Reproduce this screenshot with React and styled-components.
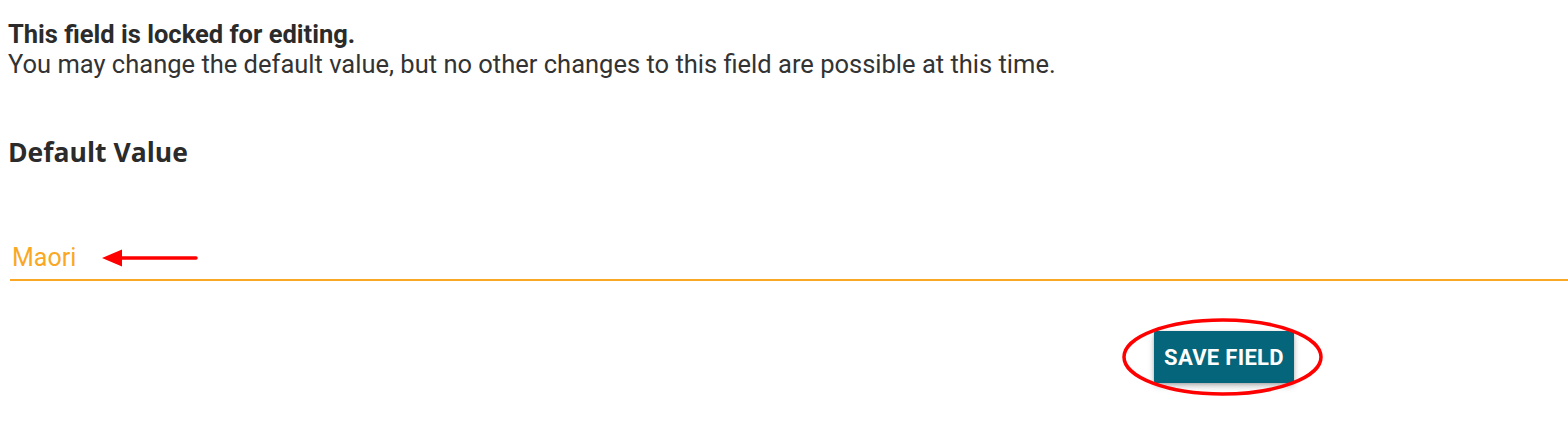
import React from "react";
import styled, { createGlobalStyle } from "styled-components";

const Global = createGlobalStyle`
  html, body { margin: 0; padding: 0; background: #fff; }
  body { font-family: Roboto, "Liberation Sans", sans-serif; color: #333; }
`;

const Page = styled.div`
  width: 1568px;
  height: 424px;
  padding: 19px 0 0 8px;
  box-sizing: border-box;
  overflow: hidden;
`;

const Notice = styled.div`
  font-size: 25.5px;
  line-height: 30px;
  color: #333;
`;

const NoticeTitle = styled.div`
  font-weight: 700;
  color: #2b2b2b;
`;

const Heading = styled.h3`
  margin: 57px 0 0 0;
  font-family: "Open Sans", "Noto Sans", sans-serif;
  font-weight: 700;
  font-size: 26.5px;
  line-height: 32px;
  color: #2b2b2b;
`;

const Field = styled.div`
  position: relative;
  margin: 63px 0 0 2px;
  border-bottom: 2px solid #f9a825;
  height: 48px;
  display: flex;
  align-items: flex-end;
`;

const Value = styled.span`
  font-size: 25px;
  line-height: 30px;
  color: #f9a825;
  padding: 0 0 6px 2px;
`;

const Arrow = styled.svg`
  position: absolute;
  left: 83px;
  top: 14px;
`;

const Actions = styled.div`
  display: flex;
  justify-content: flex-end;
  padding-right: 274px;
  margin-top: 50px;
`;

const ButtonWrap = styled.div`
  position: relative;
`;

const Button = styled.button`
  display: block;
  background: #05657a;
  color: #fff;
  border: none;
  border-radius: 2px;
  font-family: Roboto, "Liberation Sans", sans-serif;
  font-weight: 700;
  font-size: 22px;
  letter-spacing: 0.3px;
  width: 140px;
  height: 52px;
  padding: 0;
  box-shadow: 0 3px 6px rgba(0,0,0,0.25), 0 1px 3px rgba(0,0,0,0.15);
  cursor: pointer;
`;

const Ring = styled.svg`
  position: absolute;
  left: -33px;
  top: -13px;
  pointer-events: none;
`;

export default function App() {
  return (
    <>
      <Global />
      <Page>
        <Notice>
          <NoticeTitle>This field is locked for editing.</NoticeTitle>
          You may change the default value, but no other changes to this field are possible at this time.
        </Notice>
        <Heading>Default Value</Heading>
        <Field>
          <Value>Maori</Value>
          <Arrow width="120" height="26" viewBox="0 0 120 26">
            <line x1="26" y1="13" x2="103" y2="13" stroke="#f00" strokeWidth="3.5" strokeLinecap="round" />
            <polygon points="9,13 29,4.5 29,21.5" fill="#f00" />
          </Arrow>
        </Field>
        <Actions>
          <ButtonWrap>
            <Button>SAVE FIELD</Button>
            <Ring width="204" height="78" viewBox="0 0 204 78">
              <ellipse cx="101.5" cy="39" rx="98.5" ry="37" fill="none" stroke="#f00" strokeWidth="3.5" />
            </Ring>
          </ButtonWrap>
        </Actions>
      </Page>
    </>
  );
}
